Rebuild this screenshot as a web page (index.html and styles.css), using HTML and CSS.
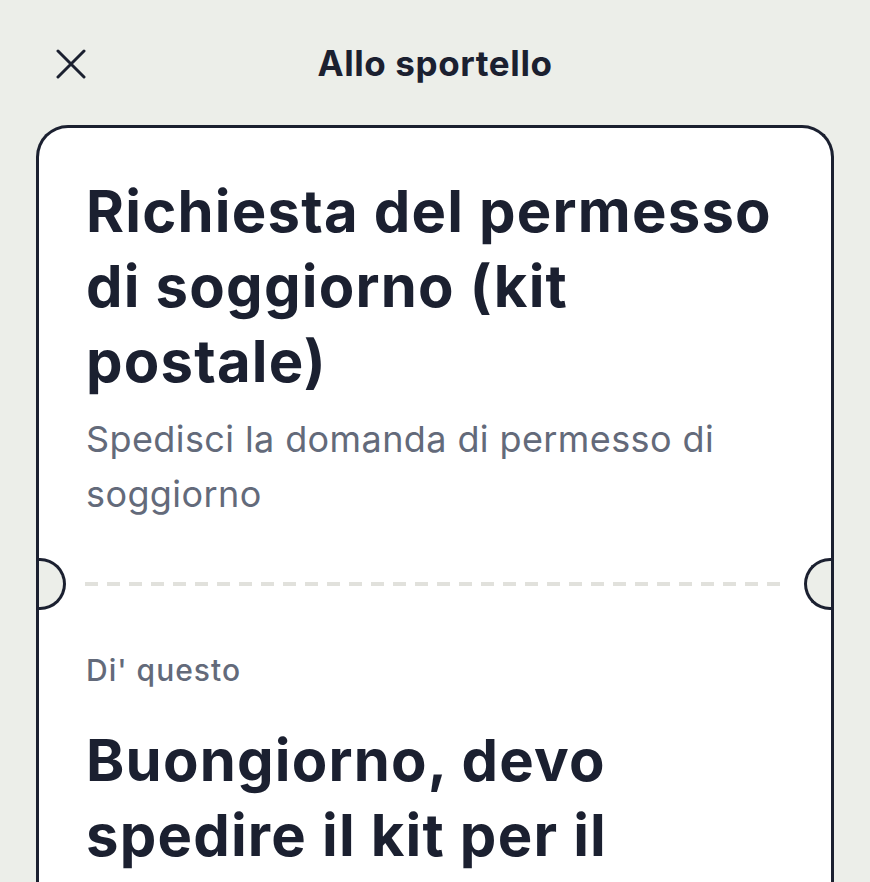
FILE: index.html
```html
<!DOCTYPE html>
<html lang="it">
<head>
<meta charset="utf-8">
<title>Allo sportello</title>
<link rel="stylesheet" href="styles.css">
</head>
<body>
<div class="screen">
  <header class="topbar">
    <button class="close" aria-label="Chiudi">
      <svg width="30" height="30" viewBox="0 0 30 30" fill="none" stroke="#1b2030" stroke-width="3" stroke-linecap="round">
        <path d="M2 2 L28 28 M28 2 L2 28"/>
      </svg>
    </button>
    <h1 class="topbar-title">Allo sportello</h1>
    <span class="spacer"></span>
  </header>
  <main class="card">
    <section class="card-top">
      <h2 class="title">Richiesta del permesso di soggiorno (kit postale)</h2>
      <p class="subtitle">Spedisci la domanda di permesso di soggiorno</p>
    </section>
    <div class="divider">
      <span class="notch notch-left"></span>
      <span class="dash"></span>
      <span class="notch notch-right"></span>
    </div>
    <section class="card-bottom">
      <p class="label">Di' questo</p>
      <p class="phrase">Buongiorno, devo spedire il kit per il permesso di soggiorno</p>
    </section>
  </main>
</div>
</body>
</html>
```

FILE: styles.css
```css
html, body {
  margin: 0;
  padding: 0;
  background: #eceee9;
  height: 100%;
  overflow: hidden;
}
body {
  font-family: Inter, "Noto Sans", sans-serif;
  color: #1b2030;
}
.screen {
  display: flex;
  flex-direction: column;
}
.topbar {
  height: 125px;
  display: grid;
  grid-template-columns: 1fr auto 1fr;
  align-items: center;
  padding: 0 0 0 56px;
  box-sizing: border-box;
}
.close {
  justify-self: start;
  background: none;
  border: 0;
  padding: 0;
  width: 30px;
  height: 30px;
  display: flex;
  margin-top: 2px;
}
.topbar-title {
  margin: 0;
  font-size: 35px;
  font-weight: 700;
  letter-spacing: 0.6px;
  padding-right: 56px;
}
.card {
  margin: 0 36px;
  background: #ffffff;
  border: 3px solid #1b2030;
  border-bottom: 0;
  border-radius: 32px 32px 0 0;
  height: 800px;
}
.card-top {
  padding: 46px 40px 0 47px;
}
.title {
  margin: 0;
  font-size: 58px;
  line-height: 75px;
  font-weight: 700;
  letter-spacing: 1.2px;
}
.subtitle {
  margin: 13px 0 0;
  font-size: 36px;
  line-height: 55px;
  letter-spacing: 0.4px;
  color: #636a7a;
}
.divider {
  position: relative;
  height: 52px;
  margin-top: 36px;
  display: flex;
  align-items: center;
  padding: 0 46px;
}
.dash {
  flex: 1;
  height: 4px;
  background: repeating-linear-gradient(90deg, #e1e1dc 0 13px, transparent 13px 22px);
}
.notch {
  position: absolute;
  top: 0;
  width: 24px;
  height: 46px;
  border: 3px solid #1b2030;
  background: #eceee9;
}
.notch-left {
  left: 0;
  border-left: 0;
  border-radius: 0 26px 26px 0;
}
.notch-right {
  right: 0;
  border-right: 0;
  border-radius: 26px 0 0 26px;
}
.card-bottom {
  padding: 40px 40px 0 47px;
}
.label {
  margin: 0;
  font-size: 30px;
  line-height: 40px;
  font-weight: 500;
  letter-spacing: 1px;
  color: #636a7a;
}
.phrase {
  margin: 33px 0 0;
  font-size: 58px;
  line-height: 75px;
  font-weight: 700;
  letter-spacing: 1.2px;
}
```
